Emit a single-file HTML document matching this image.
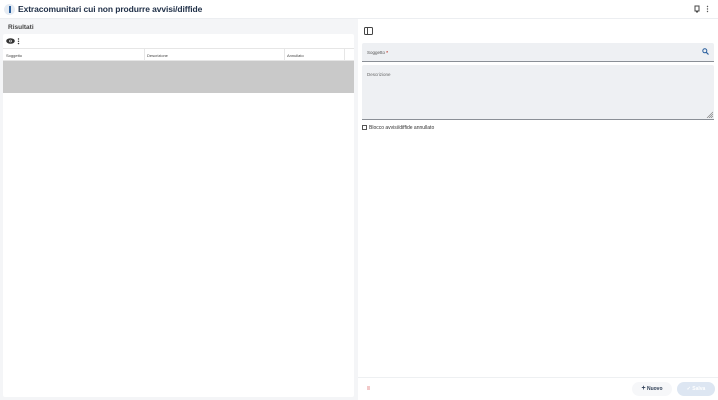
<!DOCTYPE html>
<html><head><meta charset="utf-8"><style>
*{box-sizing:border-box;margin:0;padding:0}
body{width:718px;height:400px;overflow:hidden;background:#f4f5f7;font-family:"Liberation Sans",sans-serif;position:relative;color:#333}
.hdr{position:absolute;left:0;top:0;width:718px;height:19px;background:#fff;border-bottom:1px solid #eceef1}
.logo{position:absolute;left:4px;top:4px;width:11px;height:11px;border-radius:50%;background:#e6ecf3}
.logo:after{content:"";position:absolute;left:5px;top:2px;width:2px;height:7px;background:#2a5f9e}
.title{position:absolute;left:18px;top:4px;font-size:8.5px;color:#22324a;font-weight:bold;letter-spacing:-0.1px;font-weight:600}
.res{position:absolute;left:8px;top:24px;font-size:6.5px;font-weight:bold;color:#444}
.lcard{position:absolute;left:3px;top:34px;width:351px;height:363px;background:#fff;border-radius:2px}
.th{position:absolute;left:0;top:14px;width:351px;height:13px;border-top:1px solid #e6e6e6;border-bottom:1px solid #e6e6e6;font-size:4px;color:#444}
.th span{position:absolute;top:4px}
.th i{position:absolute;top:0;height:12px;border-left:1px solid #e6e6e6}
.grey{position:absolute;left:0;top:27px;width:351px;height:32px;background:#c9c9c9}
.rp{position:absolute;left:358px;top:19px;width:360px;height:381px;background:#fff}
.f1{position:absolute;left:4px;top:24px;width:352px;height:19px;background:#eef0f3;border-bottom:1px solid #8a8f96;border-radius:2px 2px 0 0;font-size:4.5px;color:#555}
.f2{position:absolute;left:4px;top:46px;width:352px;height:55px;background:#eef0f3;border-bottom:1px solid #8a8f96;border-radius:2px 2px 0 0;font-size:4.5px;color:#666}
.chk{position:absolute;left:4px;top:106px;font-size:5px;color:#333}
.chk b{display:inline-block;width:5px;height:5px;border:1px solid #555;vertical-align:-1px;margin-right:2px}
.foot{position:absolute;left:0;top:358px;width:360px;border-top:1px solid #eef0f2}
.btn{position:absolute;top:363px;height:14px;border-radius:7px;font-size:5px;line-height:14px;text-align:center;font-weight:bold}
</style></head><body>
<div class="hdr"><div class="logo"></div><div class="title">Extracomunitari cui non produrre avvisi/diffide</div>
<svg style="position:absolute;left:694px;top:5px" width="6" height="8" viewBox="0 0 6 8"><path d="M1 1h4v5H1z" fill="none" stroke="#444" stroke-width="1"/><path d="M2 7h2" stroke="#444"/></svg>
<svg style="position:absolute;left:706px;top:5px" width="3" height="8"><circle cx="1.5" cy="1.5" r=".7" fill="#555"/><circle cx="1.5" cy="4" r=".7" fill="#555"/><circle cx="1.5" cy="6.5" r=".7" fill="#555"/></svg>
</div>
<div class="res">Risultati</div>
<div class="lcard">
<svg style="position:absolute;left:3px;top:4px" width="9" height="6" viewBox="0 0 9 6"><ellipse cx="4.5" cy="3" rx="4.3" ry="2.8" fill="#333"/><circle cx="4.5" cy="3" r="1.3" fill="#fff"/><circle cx="4.5" cy="3" r=".7" fill="#333"/></svg>
<svg style="position:absolute;left:14px;top:4px" width="3" height="7"><circle cx="1.5" cy="1" r=".7" fill="#333"/><circle cx="1.5" cy="3.3" r=".7" fill="#333"/><circle cx="1.5" cy="5.6" r=".7" fill="#333"/></svg>
<div class="th"><span style="left:3px">Soggetto</span><span style="left:144px">Descrizione</span><span style="left:284px">Annullato</span><i style="left:141px"></i><i style="left:281px"></i><i style="left:341px"></i></div>
<div class="grey"></div>
</div>
<div class="rp">
<svg style="position:absolute;left:6px;top:8px" width="9" height="8" viewBox="0 0 9 8"><rect x=".5" y=".5" width="8" height="7" rx="1" fill="none" stroke="#444"/><path d="M3.5 .5v7" stroke="#444"/></svg>
<div class="f1"><span style="position:absolute;left:5px;top:7px">Soggetto <b style="color:#c0392b">*</b></span>
<svg style="position:absolute;right:5px;top:5px" width="7" height="7" viewBox="0 0 7 7"><circle cx="2.8" cy="2.8" r="2" fill="none" stroke="#2a5f9e" stroke-width="1"/><path d="M4.3 4.3L6.5 6.5" stroke="#2a5f9e" stroke-width="1.2"/></svg></div>
<div class="f2"><span style="position:absolute;left:5px;top:7px">Descrizione</span>
<svg style="position:absolute;right:1px;bottom:1px" width="7" height="7"><path d="M1 7L7 1M3 7L7 3M5 7L7 5" stroke="#777" stroke-width=".6"/></svg></div>
<div class="chk"><b></b>Blocco avvisi/diffide annullato</div>
<div class="foot"></div>
<div style="position:absolute;left:9px;top:367px;width:3px;height:4px;background:#f2c9c9"></div>
<div class="btn" style="left:274px;width:40px;background:#f6f7f9;color:#2e3e55"><span style="font-size:7px">+</span> Nuovo</div>
<div class="btn" style="left:319px;width:38px;background:#dde6f2;color:#fff">&#10003; Salva</div>
</div>
</body></html>
